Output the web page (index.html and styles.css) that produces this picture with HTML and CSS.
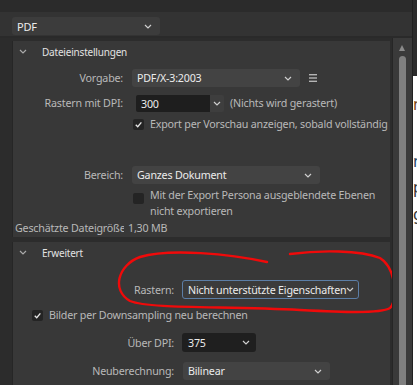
FILE: index.html
```html
<!DOCTYPE html>
<html lang="de">
<head>
    <meta charset="UTF-8">
    <title>PDF Export</title>
    <link rel="stylesheet" href="styles.css">
</head>
<body>
    <div class="app">
        <div class="main">
            <div class="topstrip"></div>
            <div class="toolbar">
                <div class="select format">PDF <svg class="chev" viewBox="0 0 8 5"><polyline points="1,1 4,4 7,1"/></svg></div>
            </div>
            <div class="content">
                <div class="panel">
                    <div class="card first">
                        <div class="card-head">
                            <svg class="chev head-chev" viewBox="0 0 8 5"><polyline points="1,1 4,4 7,1"/></svg>
                            <span>Dateieinstellungen</span>
                        </div>
                        <div class="row r-vorgabe">
                            <label class="lbl">Vorgabe:</label>
                            <div class="select preset">PDF/X-3:2003 <svg class="chev" viewBox="0 0 8 5"><polyline points="1,1 4,4 7,1"/></svg></div>
                            <svg class="menu-icon" viewBox="0 0 8 8"><rect x="0" y="0" width="8" height="1.4"/><rect x="0" y="3.3" width="8" height="1.4"/><rect x="0" y="6.6" width="8" height="1.4"/></svg>
                        </div>
                        <div class="row r-dpi">
                            <label class="lbl">Rastern mit DPI:</label>
                            <div class="spin">
                                <span class="spin-val">300</span>
                                <span class="spin-btn"><svg class="chev" viewBox="0 0 8 5"><polyline points="1,1 4,4 7,1"/></svg></span>
                            </div>
                            <span class="hint">(Nichts wird gerastert)</span>
                        </div>
                        <div class="row r-check1">
                            <span class="box checked"><svg viewBox="0 0 10 10"><polyline points="2.5,5.2 4.3,7 7.6,3"/></svg></span>
                            <span class="opt">Export per Vorschau anzeigen, sobald vollständig</span>
                        </div>
                        <div class="row r-bereich">
                            <label class="lbl">Bereich:</label>
                            <div class="select range">Ganzes Dokument <svg class="chev" viewBox="0 0 8 5"><polyline points="1,1 4,4 7,1"/></svg></div>
                        </div>
                        <div class="row r-check2">
                            <span class="box"></span>
                            <span class="opt">Mit der Export Persona ausgeblendete Ebenen<br>nicht exportieren</span>
                        </div>
                        <div class="row r-size">
                            <span class="size-lbl">Geschätzte Dateigröße</span>
                            <span class="size-val">1,30 MB</span>
                        </div>
                    </div>
                    <div class="card second">
                        <div class="card-head">
                            <svg class="chev head-chev" viewBox="0 0 8 5"><polyline points="1,1 4,4 7,1"/></svg>
                            <span>Erweitert</span>
                        </div>
                        <div class="row r-rastern">
                            <label class="lbl wide">Rastern:</label>
                            <div class="select raster">Nicht unterstützte Eigenschaften <svg class="chev" viewBox="0 0 8 5"><polyline points="1,1 4,4 7,1"/></svg></div>
                        </div>
                        <div class="row r-check3">
                            <span class="box checked"><svg viewBox="0 0 10 10"><polyline points="2.5,5.2 4.3,7 7.6,3"/></svg></span>
                            <span class="opt">Bilder per Downsampling neu berechnen</span>
                        </div>
                        <div class="row r-ueber">
                            <label class="lbl wide">Über DPI:</label>
                            <div class="dpi-field">375 <svg class="chev" viewBox="0 0 8 5"><polyline points="1,1 4,4 7,1"/></svg></div>
                        </div>
                        <div class="row r-neu">
                            <label class="lbl wide">Neuberechnung:</label>
                            <div class="select resample">Bilinear <svg class="chev" viewBox="0 0 8 5"><polyline points="1,1 4,4 7,1"/></svg></div>
                        </div>
                    </div>
                    <svg class="scribble" viewBox="0 0 392 347" width="392" height="347">
                        <path d="M267,224 C230,216 170,210 140,219 C118,227 111,252 130,263 C150,271 220,268 300,272 C340,274 380,276 390,270 C398,262 396,230 380,220 C360,212 320,212 290,216"/>
                    </svg>
                </div>
                <div class="scrollbar">
                    <span class="arrow"></span>
                    <span class="thumb"></span>
                </div>
            </div>
        </div>
        <div class="behind">
            <div class="behind-top"></div>
            <div class="behind-page">
                <span class="frag f1">n</span>
                <span class="frag f2">n</span>
                <span class="frag f3">p</span>
                <span class="frag f4">g</span>
            </div>
        </div>
    </div>
</body>
</html>
```

FILE: styles.css
```css
body {
    margin: 0;
    background-color: #2e2e2e;
    font-family: "Noto Sans", "Open Sans", sans-serif;
    font-size: 10.7px;
    letter-spacing: -0.2px;
    color: #b9b9b9;
    overflow: hidden;
    white-space: nowrap;
}

.app {
    display: flex;
    width: 417px;
    height: 385px;
}

.main {
    width: 413px;
    display: flex;
    flex-direction: column;
    border-right: 1px solid #202020;
    box-sizing: border-box;
}

.topstrip {
    height: 12px;
    background: #2b2b2b;
}

.toolbar {
    height: 26px;
    background: #333333;
    padding: 5px 0 0 12px;
    box-sizing: border-box;
    border-bottom: 2px solid #2a2a2a;
}

.chev {
    width: 8px;
    height: 5px;
    fill: none;
    stroke: #cfcfcf;
    stroke-width: 1.2;
    flex-shrink: 0;
}

.select {
    display: flex;
    align-items: center;
    justify-content: space-between;
    height: 18px;
    padding: 0 8px 0 5px;
    background: #434343;
    border-radius: 3px;
    color: #ececec;
    box-sizing: border-box;
}

.format {
    width: 148px;
    height: 18px;
    background: #3c3c3c;
    font-size: 11px;
}

.content {
    flex: 1;
    display: flex;
    min-height: 0;
}

.panel {
    position: relative;
    width: 392px;
    padding-left: 12px;
    box-sizing: border-box;
    background: #2c2c2c;
    overflow: hidden;
}

.card {
    background: #383838;
    border-left: 1px solid #262626;
    margin-right: 2px;
}

.first {
    height: 196px;
    margin-top: 3px;
}

.second {
    margin-top: 5px;
    height: 200px;
}

.card-head {
    display: flex;
    align-items: center;
    height: 21px;
    color: #e2e2e2;
    font-size: 10px;
}

.head-chev {
    margin: 0 15px 0 6px;
    stroke: #aaaaaa;
}

.row {
    display: flex;
    align-items: center;
}

.lbl {
    width: 110px;
    text-align: right;
    margin-right: 9px;
}

.lbl.wide {
    width: 161px;
    margin-right: 8px;
}

.r-vorgabe {
    margin-top: 7px;
    height: 18px;
}

.preset {
    width: 168px;
}

.menu-icon {
    width: 8px;
    height: 8px;
    margin-left: 9px;
    fill: #b5b5b5;
}

.r-dpi {
    margin-top: 7px;
    height: 18px;
}

.spin {
    display: flex;
    height: 17px;
    margin-left: 4px;
}

.spin-val {
    width: 69px;
    background: #1e1e1e;
    color: #ececec;
    padding-left: 5px;
    line-height: 18px;
    border-radius: 2px 0 0 2px;
}

.spin-btn {
    width: 14px;
    background: #3e3e3e;
    display: flex;
    align-items: center;
    justify-content: center;
    border-radius: 0 2px 2px 0;
}

.hint {
    margin-left: 6px;
}

.box {
    width: 11px;
    height: 11px;
    background: #242424;
    border-radius: 2px;
    margin-right: 6px;
    flex-shrink: 0;
    display: flex;
}

.box svg {
    width: 11px;
    height: 11px;
    fill: none;
    stroke: #e6e6e6;
    stroke-width: 1.2;
}

.r-check1 {
    margin-top: 4px;
    height: 16px;
    padding-left: 120px;
}

.r-bereich {
    margin-top: 34px;
    height: 18px;
}

.range {
    width: 188px;
}

.r-check2 {
    margin-top: 3px;
    padding-left: 120px;
    align-items: flex-start;
    line-height: 16px;
}

.r-check2 .box {
    margin-top: 6px;
}

.r-size {
    height: 17px;
    padding-left: 2px;
}

.size-lbl {
    width: 109px;
    overflow: hidden;
    margin-right: 4px;
    flex-shrink: 0;
}

.r-rastern {
    margin-top: 17px;
    height: 19px;
}

.raster {
    width: 177px;
    height: 19px;
    background: #3b3b3b;
    border: 1px solid #5c7ea6;
    padding: 0 6px 0 5px;
}

.r-check3 {
    margin-top: 8px;
    height: 16px;
    padding-left: 19px;
}

.r-ueber {
    margin-top: 10px;
    height: 19px;
}

.dpi-field {
    display: flex;
    align-items: center;
    justify-content: space-between;
    width: 74px;
    height: 19px;
    background: #1f1f1f;
    color: #ececec;
    border-radius: 3px;
    padding: 0 6px 0 6px;
    box-sizing: border-box;
}

.r-neu {
    margin-top: 10px;
    height: 18px;
}

.resample {
    width: 147px;
    margin-left: 1px;
}

.scribble {
    position: absolute;
    left: 0;
    top: 0;
    pointer-events: none;
}

.scribble path {
    fill: none;
    stroke: #f00a0a;
    stroke-width: 2.4;
    stroke-linecap: round;
}

.scrollbar {
    position: relative;
    width: 20px;
    background: #3a3a3a;
    border-left: 1px solid #262626;
    box-sizing: border-box;
}

.arrow {
    position: absolute;
    left: 6px;
    top: 7px;
    border-left: 3.5px solid transparent;
    border-right: 3.5px solid transparent;
    border-bottom: 6px solid #8a8a8a;
}

.thumb {
    position: absolute;
    left: 6px;
    top: 18px;
    bottom: 0;
    width: 7px;
    background: #7f7f7f;
    border-radius: 4px 4px 0 0;
}

.behind {
    width: 4px;
    display: flex;
    flex-direction: column;
}

.behind-top {
    height: 76px;
    background: #2b2b2b;
}

.behind-page {
    flex: 1;
    background: #ffffff;
    position: relative;
    overflow: hidden;
    font-size: 16px;
}

.frag {
    position: absolute;
    left: 0;
    line-height: 1;
    color: #333333;
}

.f1 { top: 20px; color: #7a4a1a; }
.f2 { top: 77px; color: #2a4a6a; }
.f3 { top: 103px; }
.f4 { top: 130px; }
```
